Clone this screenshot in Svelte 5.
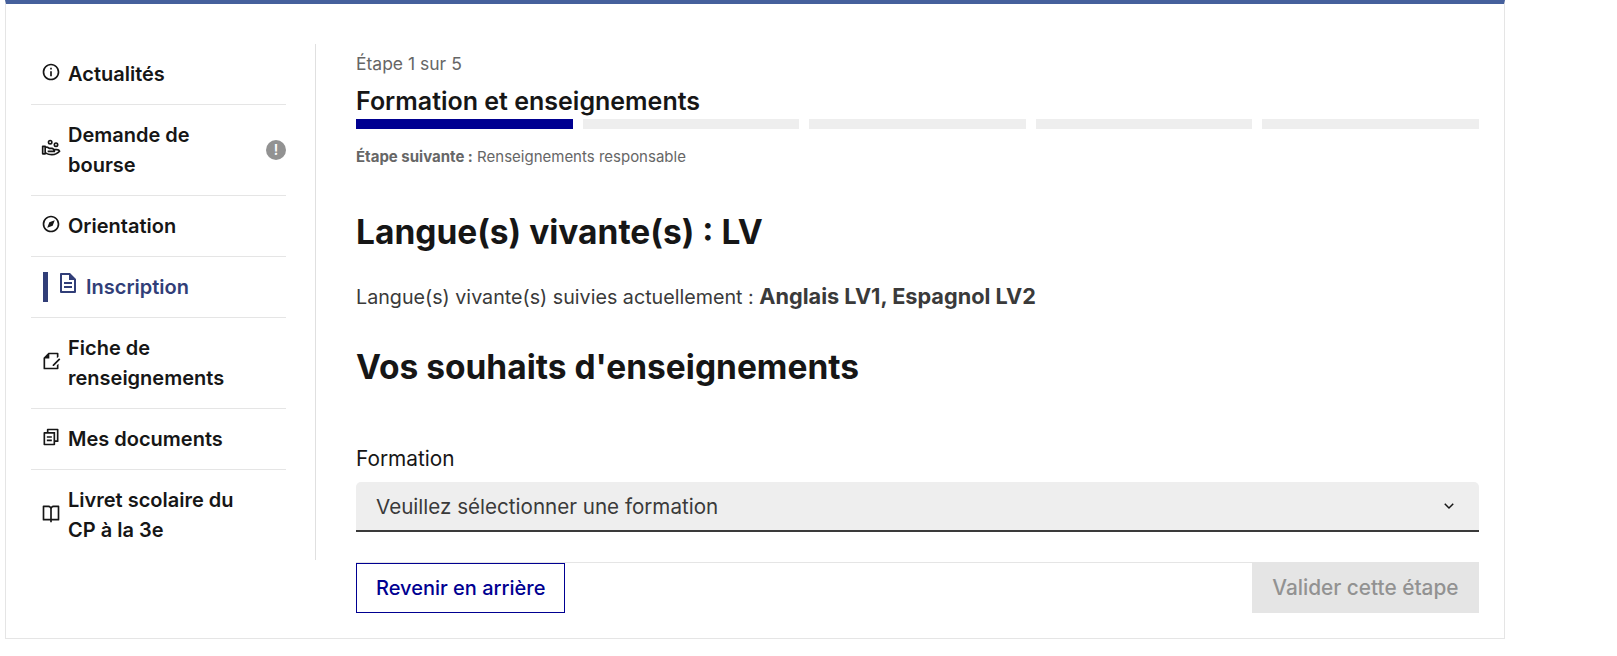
<script>
  const icons = {
    info: "M12 22C6.477 22 2 17.523 2 12S6.477 2 12 2s10 4.477 10 10-4.477 10-10 10zm0-2a8 8 0 1 0 0-16 8 8 0 0 0 0 16zM11 7h2v2h-2V7zm0 4h2v6h-2v-6z",
    hand: "M5 9a1 1 0 0 1 1 1a6.97 6.97 0 0 1 4.33 1.5h2.17c1.332 0 2.53.579 3.353 1.499L19 13a5 5 0 0 1 4.516 2.851c-2.365 3.121-6.194 5.149-10.516 5.149c-2.79 0-5.15-.603-7.06-1.658A.998.998 0 0 1 5 20H2a1 1 0 0 1-1-1v-9a1 1 0 0 1 1-1h3zm1.001 3L6 17.022l.045.032C7.84 18.314 10.178 19 13 19c3.004 0 5.799-1.156 7.835-3.13l.133-.133-.12-.1a2.994 2.994 0 0 0-1.643-.63L19 15l-2.112-.001c.073.322.112.657.112 1.001v1H8v-2l6.79-.001-.034-.078a2.501 2.501 0 0 0-2.092-1.416L12.5 13.5H9.57A4.985 4.985 0 0 0 6.002 12zM4 11H3v7h1v-7zm14-6a3 3 0 1 1 0 6 3 3 0 0 1 0-6zm0 2a1 1 0 1 0 0 2 1 1 0 0 0 0-2zm-7-5a3 3 0 1 1 0 6 3 3 0 0 1 0-6zm0 2a1 1 0 1 0 0 2 1 1 0 0 0 0-2z",
    compass: "M12 22C6.477 22 2 17.523 2 12S6.477 2 12 2s10 4.477 10 10-4.477 10-10 10zm0-2a8 8 0 1 0 0-16 8 8 0 0 0 0 16zm4.5-12.5l-2.5 6.5-6.5 2.5 2.5-6.5 6.5-2.5z",
    file: "M20 8v13a1 1 0 0 1-1 1H5a1 1 0 0 1-1-1V3c0-.55.45-1 1-1h9l6 6zm-2 1h-5V4H6v16h12V9zM8 11h8v2H8v-2zm0 4h8v2H8v-2z",
    fiche: "M21 6.757l-2 2V4h-9v5H5v11h14v-2.757l2-2v5.765a.993.993 0 0 1-.993.992H3.993A1 1 0 0 1 3 20.993V8l6-6h10.997C20.55 2 21 2.455 21 2.992v3.765zm.778 2.05l1.414 1.415L15.414 18l-1.416-.002.002-1.413 7.778-7.778z",
    copy: "M7 6V3a1 1 0 0 1 1-1h12a1 1 0 0 1 1 1v14a1 1 0 0 1-1 1h-3v3c0 .552-.45 1-1.007 1H4.007A1.001 1.001 0 0 1 3 21l.003-14c0-.552.45-1 1.007-1H7zM5.003 8L5 20h10V8H5.003zM9 6h8v10h2V4H9v2zm-2 5h6v2H7v-2zm0 4h6v2H7v-2z",
    book: "M13 21v2h-2v-2H3a1 1 0 0 1-1-1V4a1 1 0 0 1 1-1h6a3.99 3.99 0 0 1 3 1.354A3.99 3.99 0 0 1 15 3h6a1 1 0 0 1 1 1v16a1 1 0 0 1-1 1h-8zm7-2V5h-5a2 2 0 0 0-2 2v12h7zm-9 0V7a2 2 0 0 0-2-2H4v14h7z"
  };

  const menu = [
    { label: "Actualités", icon: "info" },
    { label: "Demande de bourse", icon: "hand", alert: true },
    { label: "Orientation", icon: "compass" },
    { label: "Inscription", icon: "file", active: true },
    { label: "Fiche de renseignements", icon: "fiche" },
    { label: "Mes documents", icon: "copy" },
    { label: "Livret scolaire du CP à la 3e", icon: "book" }
  ];

  const steps = [1, 2, 3, 4, 5];
  const current = 1;
</script>

<div class="card">
  <nav class="sidebar">
    {#each menu as item}
      <a class="item" class:active={item.active} href="#top">
        <svg class="icon" viewBox="0 0 24 24"><path d={icons[item.icon]} /></svg>
        <span class="label">{item.label}</span>
        {#if item.alert}
          <span class="alert">!</span>
        {/if}
      </a>
    {/each}
  </nav>

  <main class="content">
    <p class="count">Étape 1 sur 5</p>
    <h2 class="stepTitle">Formation et enseignements</h2>
    <div class="bars">
      {#each steps as step}
        <span class="bar" class:done={step <= current}></span>
      {/each}
    </div>
    <p class="next"><b>Étape suivante :</b> Renseignements responsable</p>

    <h1 class="first">Langue(s) vivante(s) : LV</h1>
    <p class="current">Langue(s) vivante(s) suivies actuellement : <b>Anglais LV1, Espagnol LV2</b></p>
    <h1 class="second">Vos souhaits d'enseignements</h1>

    <label class="fieldLabel" for="formation">Formation</label>
    <div class="selectWrap">
      <select id="formation">
        <option>Veuillez sélectionner une formation</option>
      </select>
      <svg class="chevron" viewBox="0 0 24 24"><path d="M12 13.172l4.95-4.95 1.414 1.414L12 16 5.636 9.636 7.05 8.222z" /></svg>
    </div>

    <div class="actions">
      <button class="back">Revenir en arrière</button>
      <button class="submit" disabled>Valider cette étape</button>
    </div>
  </main>
</div>

<style>
  :global(body) {
    background: #fff;
  }

  .card {
    box-sizing: border-box;
    display: flex;
    align-items: flex-start;
    width: 1500px;
    height: 639px;
    margin-left: 5px;
    padding: 40px 25px 0 25px;
    background: #fff;
    border: 1px solid #e5e5e5;
    border-top: 4px solid #45609c;
    font-family: Inter, "Noto Sans", sans-serif;
    color: #161616;
  }

  .sidebar {
    box-sizing: border-box;
    flex: none;
    width: 285px;
    padding-right: 29px;
    border-right: 1px solid #e0e0e0;
  }

  .item {
    display: flex;
    align-items: center;
    box-sizing: border-box;
    padding: 15px 0 15px 10px;
    border-bottom: 1px solid #e5e5e5;
    color: #161616;
    font-size: 20px;
    font-weight: 600;
    line-height: 30px;
    text-decoration: none;
  }

  .item:last-child {
    border-bottom: none;
  }

  .icon {
    flex: none;
    width: 20px;
    height: 20px;
    margin-right: 7px;
    margin-top: -5px;
    fill: #161616;
  }

  .label {
    flex: 1;
    max-width: 190px;
  }

  .alert {
    flex: none;
    width: 20px;
    height: 20px;
    margin-left: auto;
    border-radius: 50%;
    background: #929292;
    color: #fff;
    font-size: 14px;
    line-height: 20px;
    text-align: center;
  }

  .item.active {
    position: relative;
    padding-left: 25px;
    color: #313e78;
  }

  .item.active::before {
    content: "";
    position: absolute;
    left: 12px;
    top: 15px;
    width: 5px;
    height: 30px;
    background: #313e78;
  }

  .item.active .icon {
    width: 24px;
    height: 24px;
    margin-top: -8px;
    margin-right: 6px;
    fill: #313e78;
  }

  .content {
    flex: 1;
    padding-left: 40px;
    min-width: 0;
  }

  p, h1, h2 {
    margin: 0;
  }

  .count {
    margin-top: 7px;
    color: #666;
    font-size: 17.5px;
    line-height: 25px;
  }

  .stepTitle {
    margin-top: 10px;
    font-size: 25px;
    font-weight: 600;
    line-height: 30px;
  }

  .bars {
    display: flex;
    gap: 10px;
    margin-top: 3px;
  }

  .bar {
    flex: 1;
    height: 10px;
    background: #eee;
  }

  .bar.done {
    background: #000091;
  }

  .next {
    margin-top: 18px;
    color: #666;
    font-size: 15px;
    line-height: 20px;
  }

  h1 {
    font-size: 33.5px;
    font-weight: 700;
    line-height: 44px;
  }

  .first {
    margin-top: 43px;
  }

  .current {
    margin-top: 27px;
    color: #3a3a3a;
    font-size: 19.7px;
    line-height: 30px;
  }

  .current b {
    font-size: 21.7px;
  }

  .second {
    margin-top: 33px;
  }

  .fieldLabel {
    display: block;
    margin-top: 55px;
    font-size: 20.8px;
    line-height: 30px;
  }

  .selectWrap {
    position: relative;
    margin-top: 8px;
  }

  select {
    display: block;
    box-sizing: border-box;
    width: 100%;
    height: 50px;
    padding: 0 50px 0 20px;
    appearance: none;
    border: none;
    border-bottom: 2px solid #3a3a3a;
    border-radius: 5px 5px 0 0;
    background: #eee;
    color: #3a3a3a;
    font: inherit;
    font-size: 20.6px;
  }

  .chevron {
    position: absolute;
    right: 21px;
    top: 15px;
    width: 18px;
    height: 18px;
    fill: #161616;
    pointer-events: none;
  }

  .actions {
    display: flex;
    justify-content: space-between;
    align-items: flex-start;
    margin-top: 30px;
    border-top: 1px solid #e5e5e5;
  }

  button {
    box-sizing: border-box;
    height: 50px;
    padding: 0 19px;
    font: inherit;
    font-size: 20px;
    font-weight: 500;
    border-radius: 0;
  }

  .back {
    border: 1px solid #000091;
    background: #fff;
    color: #000091;
  }

  .submit {
    margin-top: -1px;
    height: 51px;
    padding: 0 20.5px;
    border: none;
    background: #e5e5e5;
    color: #929292;
    font-size: 20.8px;
  }
</style>
